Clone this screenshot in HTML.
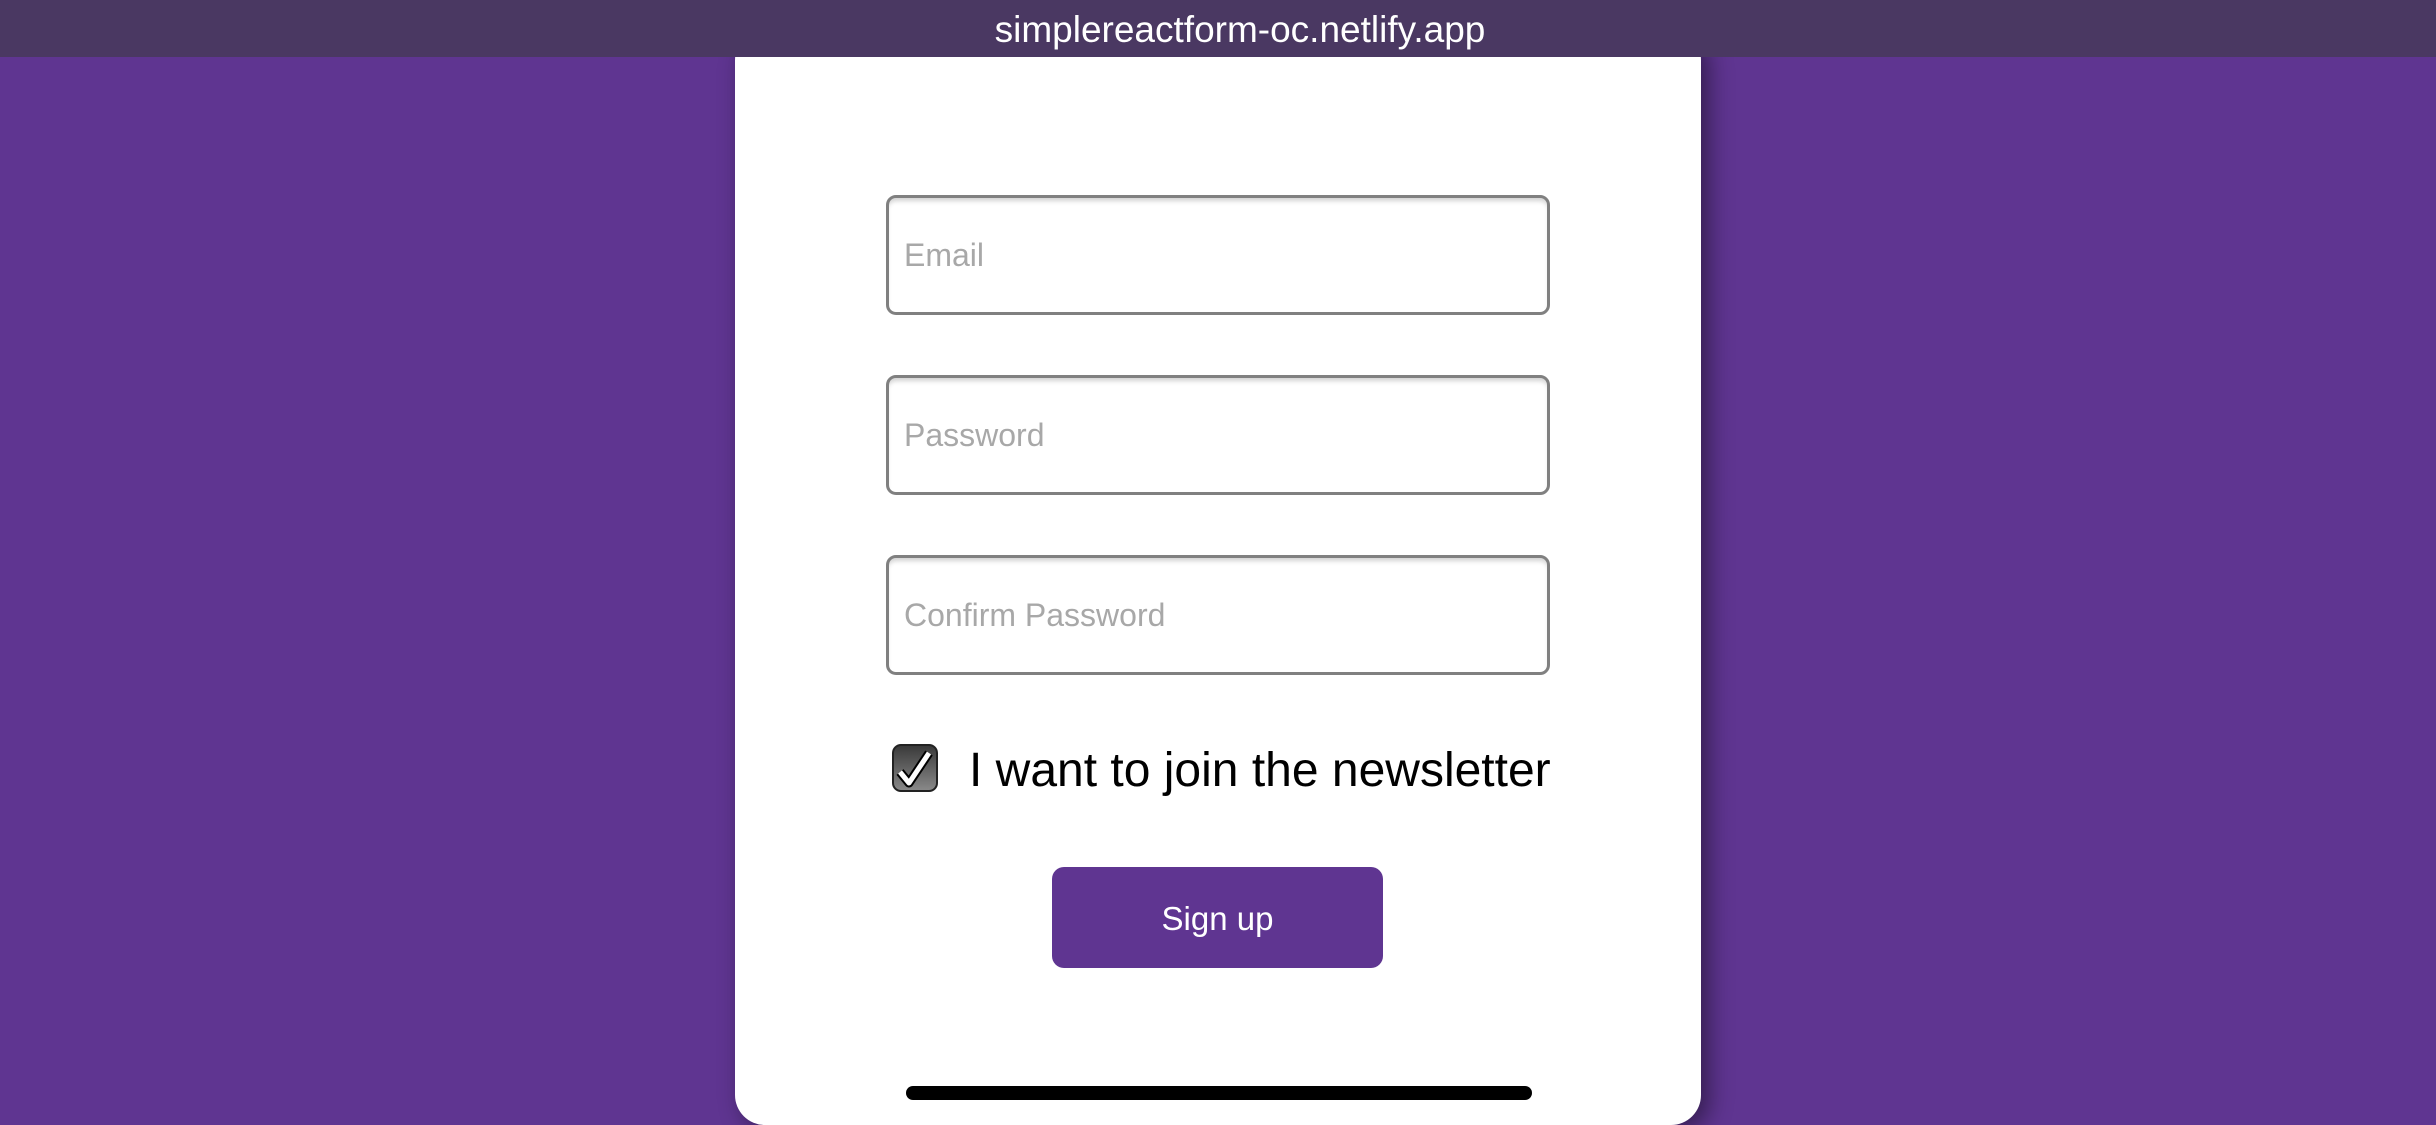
<!DOCTYPE html>
<html><head><meta charset="utf-8"><style>
html,body{margin:0;padding:0}
body{width:2436px;height:1125px;background:#5f3591;position:relative;overflow:hidden;font-family:"Liberation Sans",Arial,sans-serif}
.hdr{position:absolute;left:0;top:0;width:2392px;padding-left:44px;height:57px;background:#4a3862;color:#fff;font-size:37px;text-align:center;line-height:60px;z-index:3}
.card{position:absolute;left:735px;top:30px;width:966px;height:1095px;background:#fff;border-radius:30px;box-shadow:8px 6px 24px rgba(0,0,0,.45)}
.inp{position:absolute;left:886px;width:643px;height:114px;border:3px solid #808080;border-radius:10px;box-shadow:inset 0 5px 5px -2px rgba(0,0,0,.18);color:#a8a8a8;font-size:32px;line-height:114px;padding-left:15px;box-sizing:content-box}
.cb{position:absolute;left:892px;top:744px;width:42px;height:44px;border:2px solid #222;border-radius:9px;background:linear-gradient(#3a3a3a,#888)}
.lbl{position:absolute;left:969px;top:743px;font-size:48px;color:#000;white-space:nowrap}
.btn{position:absolute;left:1052px;top:867px;width:331px;height:101px;background:#5f3591;border-radius:12px;color:#fff;font-size:33px;text-align:center;line-height:103px}
.bar{position:absolute;left:906px;top:1086px;width:626px;height:14px;background:#000;border-radius:7px}
</style></head><body>
<div class="hdr">simplereactform-oc.netlify.app</div>
<div class="card"></div>
<div class="inp" style="top:195px">Email</div>
<div class="inp" style="top:375px">Password</div>
<div class="inp" style="top:555px">Confirm Password</div>
<div class="cb"><svg width="42" height="44" viewBox="0 0 42 44"><path d="M6 26 L15 37 L35 7" fill="none" stroke="#000" stroke-width="9" stroke-linejoin="round"/><path d="M6 26 L15 37 L35 7" fill="none" stroke="#fff" stroke-width="5" stroke-linejoin="round"/></svg></div>
<div class="lbl">I want to join the newsletter</div>
<div class="btn">Sign up</div>
<div class="bar"></div>
</body></html>
